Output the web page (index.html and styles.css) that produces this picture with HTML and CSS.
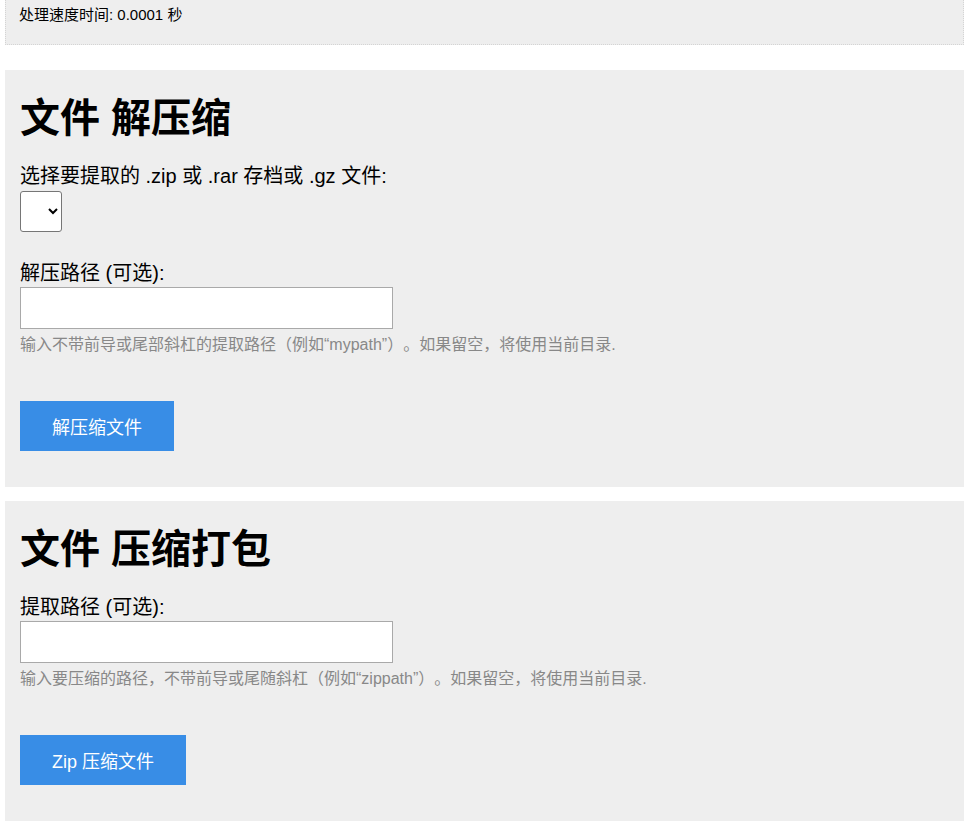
FILE: index.html
```html
<!DOCTYPE html>
<html lang="zh-CN">
<head>
<meta charset="utf-8">
<title>文件 解压缩</title>
<link rel="stylesheet" href="styles.css">
</head>
<body>
<div class="page">
  <div class="timing">处理速度时间: 0.0001 秒</div>

  <form class="panel">
    <h1>文件 解压缩</h1>
    <label class="field-label" for="archive">选择要提取的 .zip 或 .rar 存档或 .gz 文件:</label>
    <select id="archive" class="select"></select>
    <label class="field-label spaced" for="extract">解压路径 (可选):</label>
    <input id="extract" class="text-input" type="text">
    <p class="help">输入不带前导或尾部斜杠的提取路径（例如“mypath”）。如果留空，将使用当前目录.</p>
    <button type="button" class="btn">解压缩文件</button>
  </form>

  <form class="panel">
    <h1>文件 压缩打包</h1>
    <label class="field-label" for="zip">提取路径 (可选):</label>
    <input id="zip" class="text-input" type="text">
    <p class="help">输入要压缩的路径，不带前导或尾随斜杠（例如“zippath”）。如果留空，将使用当前目录.</p>
    <button type="button" class="btn">Zip 压缩文件</button>
  </form>
</div>
</body>
</html>
```

FILE: styles.css
```css
html, body {
  margin: 0;
  padding: 0;
  background: #fff;
}

body {
  font-family: "Liberation Sans", "Noto Sans CJK SC", sans-serif;
  color: #000;
  text-spacing-trim: space-all;
}

.page {
  width: 959px;
  padding-left: 5px;
  display: flex;
  flex-direction: column;
}

.timing {
  box-sizing: border-box;
  height: 45px;
  padding: 4px 13px 0;
  line-height: 22px;
  font-size: 15px;
  background: #eee;
  border: 1px dotted #d4d4d4;
  border-top: none;
  margin-bottom: 25px;
}

.panel {
  background: #eee;
  padding: 15px 15px 36px;
  margin: 0 0 14px;
  display: flex;
  flex-direction: column;
  align-items: flex-start;
}

.panel h1 {
  font-size: 40px;
  line-height: 48px;
  font-weight: bold;
  margin: 9px 0 22px;
}

.field-label {
  display: block;
  font-size: 20px;
  line-height: 24px;
  margin-bottom: 2px;
}

.field-label.spaced {
  margin-top: 29px;
}

.select {
  box-sizing: border-box;
  width: 42px;
  height: 41px;
  border: 1px solid #767676;
  border-radius: 3px;
  background: #fff;
  font-size: 16px;
  margin: 1px 0 0;
}

.text-input {
  box-sizing: border-box;
  width: 373px;
  height: 42px;
  border: 1px solid #a9a9a9;
  background: #fff;
  margin: 0;
  padding: 4px 8px;
  font-size: 16px;
}

.help {
  font-size: 16px;
  line-height: 24px;
  color: #888;
  margin: 4px 0 44px;
}

.btn {
  height: 50px;
  padding: 0 32px;
  border: none;
  background: #388de6;
  color: #fff;
  font-family: "Liberation Sans", "Noto Sans CJK SC", sans-serif;
  font-size: 18px;
  cursor: pointer;
}
```
